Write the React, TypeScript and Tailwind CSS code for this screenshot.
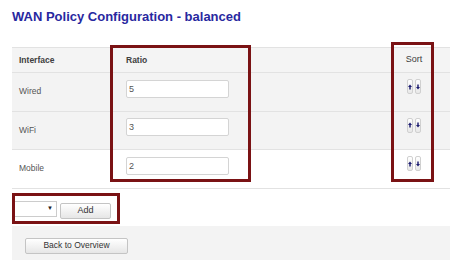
const rows = [
  { name: 'Wired', ratio: '5', bg: 'bg-[#f3f3f3]' },
  { name: 'WiFi', ratio: '3', bg: 'bg-[#f3f3f3]' },
  { name: 'Mobile', ratio: '2', bg: 'bg-white' },
];

function ArrowBtn({ down }: { down?: boolean }) {
  return (
    <div className="w-[6px] h-[15px] rounded-[2px] border border-[#d0d0d0] bg-linear-to-b from-white to-[#e8e8e8] flex items-center justify-center">
      <svg width="5" height="6" viewBox="0 0 5 6" className={down ? 'rotate-180' : ''}>
        <polygon points="2.5,0 5,3 3.4,3 3.4,6 1.6,6 1.6,3 0,3" fill="#1c1c70" />
      </svg>
    </div>
  );
}

export default function App() {
  return (
    <div
      className="relative w-[450px] h-[260px] overflow-hidden bg-white text-[#555]"
      style={{ fontFamily: '"Liberation Sans", Arial, sans-serif' }}
    >
      <h2 className="pl-3 pt-[9px] text-[13px] leading-[16px] font-bold text-[#2828a0]">
        WAN Policy Configuration - balanced
      </h2>

      {/* Table */}
      <div className="ml-3 mt-[22px] border-b border-[#e2e2e2]">
        <div className="flex items-center h-[25px] bg-[#f4f4f4] border-t border-[#e2e2e2] text-[8.5px] font-bold text-[#404040]">
          <div className="w-[99px] pl-[7px]">Interface</div>
          <div className="w-[281px] pl-[15px]">Ratio</div>
          <div className="w-[44px] text-center font-normal text-[9px]">Sort</div>
        </div>
        {rows.map((r) => (
          <div key={r.name} className={`flex items-center h-[38.5px] border-t border-[#e2e2e2] ${r.bg}`}>
            <div className="w-[99px] pl-[7px] text-[8.5px]">{r.name}</div>
            <div className="w-[281px] pl-[15px]">
              <div className="mb-[6px] w-[103px] h-[18px] rounded-[2px] border border-[#d4d4d4] bg-white pl-[2px] text-[9px] leading-[16px] text-[#555]">
                {r.ratio}
              </div>
            </div>
            <div className="w-[44px] flex justify-center gap-[2px] mb-[10px]">
              <ArrowBtn />
              <ArrowBtn down />
            </div>
          </div>
        ))}
      </div>

      {/* Add row */}
      <div className="flex items-start pl-3 pt-[12px] h-[37px]">
        <div className="w-[45px] h-[16px] border border-[#ccc] bg-white flex items-center justify-end pr-[3px] text-[6px] text-[#222]">
          ▼
        </div>
        <button className="ml-[3px] mt-[2px] w-[51px] h-[16px] rounded-[2px] border border-[#c4c4c4] bg-linear-to-b from-white to-[#e6e6e6] text-[9px] text-[#333]">
          Add
        </button>
      </div>

      {/* Footer */}
      <div className="ml-3 h-[35px] bg-[#f3f3f3] pl-[13px] pt-[12px]">
        <button className="block w-[103px] h-[16px] rounded-[2px] border border-[#c4c4c4] bg-linear-to-b from-white to-[#e6e6e6] text-[8.5px] text-[#333]">
          Back to Overview
        </button>
      </div>

      {/* Annotation boxes */}
      <div className="absolute left-[110px] top-[45px] w-[141px] h-[137px] border-[3px] border-[#7a1214]" />
      <div className="absolute left-[391px] top-[42px] w-[43px] h-[140px] border-[3px] border-[#7a1214]" />
      <div className="absolute left-[12px] top-[193px] w-[108px] h-[31px] border-[3px] border-[#7a1214]" />
    </div>
  );
}
